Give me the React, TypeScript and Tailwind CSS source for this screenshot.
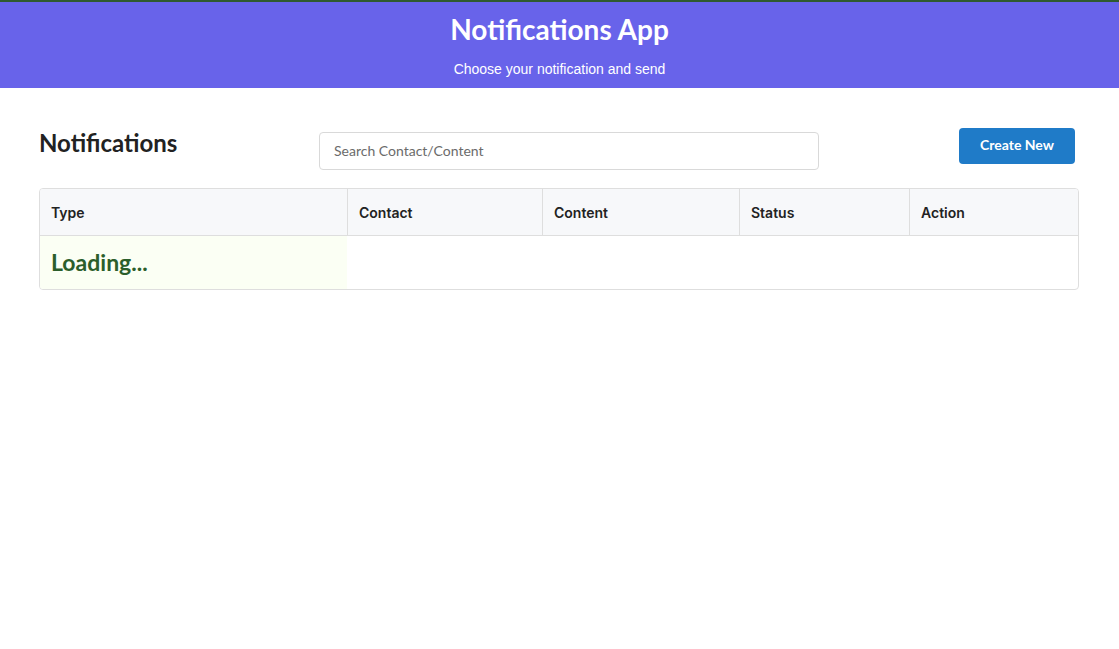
export default function App() {
  const columns = [
    { label: "Type", width: "w-[308px]" },
    { label: "Contact", width: "w-[195px]" },
    { label: "Content", width: "w-[197px]" },
    { label: "Status", width: "w-[170px]" },
    { label: "Action", width: "flex-1" },
  ];

  return (
    <div className="min-h-screen bg-white">
      <header className="h-[88px] border-t-2 border-[#2f5a2f] bg-[#6863ea] text-center text-white">
        <h1 className="pt-[10px] font-['Lato',sans-serif] text-[28px] font-bold leading-[34px]">
          Notifications App
        </h1>
        <p className="mt-[15px] font-['Liberation_Sans',Arial,sans-serif] text-[14px] leading-[16px]">
          Choose your notification and send
        </p>
      </header>

      <main className="pl-[39px] pr-[40px] pt-[40px]">
        <div className="flex items-start">
          <h2 className="w-[280px] font-['Lato',sans-serif] text-[24px] font-bold leading-[30px] text-[#222]">
            Notifications
          </h2>
          <input
            type="text"
            placeholder="Search Contact/Content"
            className="mt-[4px] h-[38px] w-[500px] rounded-[4px] border border-[#d9d9d9] px-[14px] pb-[1px] font-['Lato',sans-serif] text-[14px] text-[#333] placeholder:text-[#6b6b6b] outline-none"
          />
          <div className="flex flex-1 justify-end pr-[4px]">
            <button className="h-[36px] w-[116px] rounded-[4px] bg-[#1f7bc8] pb-[3px] font-['Lato',sans-serif] text-[14px] font-bold text-white">
              Create New
            </button>
          </div>
        </div>

        <div className="mt-[18px] overflow-hidden rounded-[4px] border border-[#dedede]">
          <div className="flex h-[47px] border-b border-[#dedede] bg-[#f7f8fa]">
            {columns.map((c, i) => (
              <div
                key={c.label}
                className={`${c.width} flex items-center px-[11px] font-['Inter',sans-serif] text-[14px] font-semibold text-[#222] ${
                  i < columns.length - 1 ? "border-r border-[#dedede]" : ""
                }`}
              >
                {c.label}
              </div>
            ))}
          </div>
          <div className="flex h-[53px]">
            <div className="flex w-[307px] items-center bg-[#fbfff4] px-[11px] font-['Lato',sans-serif] text-[23px] font-bold text-[#2b5e2b]">
              Loading...
            </div>
          </div>
        </div>
      </main>
    </div>
  );
}
